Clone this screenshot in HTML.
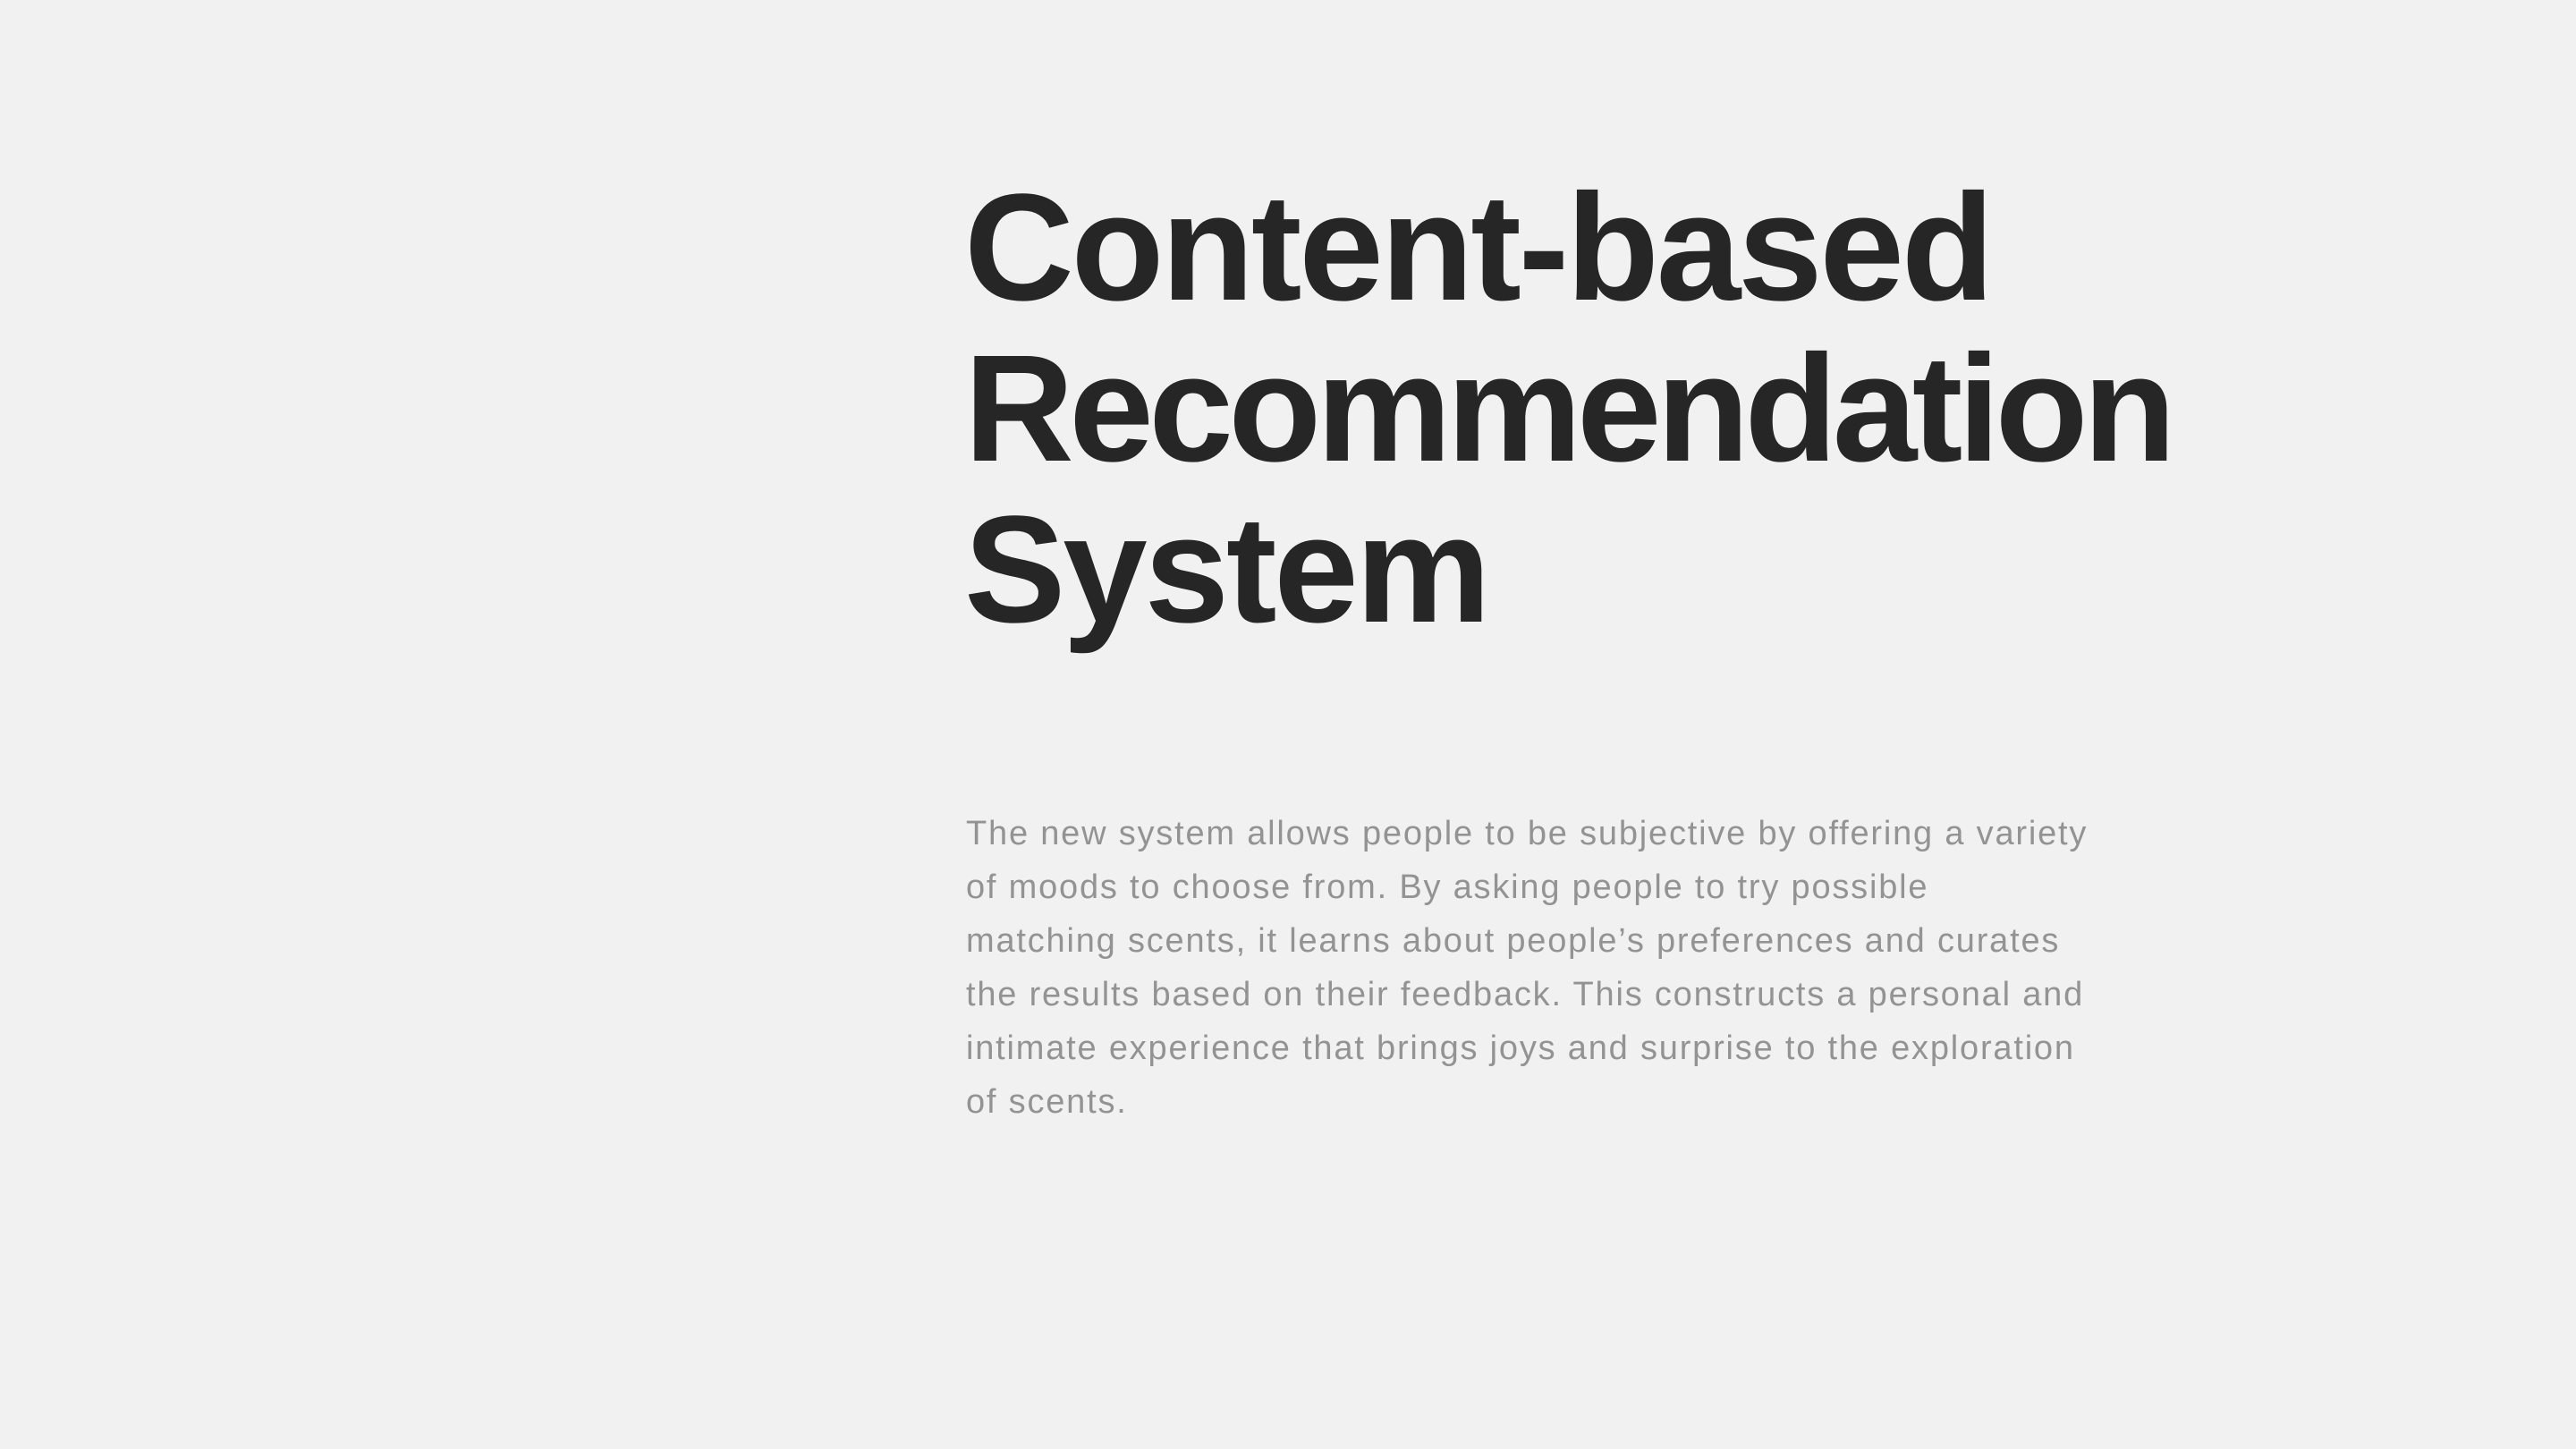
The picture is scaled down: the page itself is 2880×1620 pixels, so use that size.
<!DOCTYPE html>
<html><head><meta charset="utf-8"><style>
html,body{margin:0;padding:0;background:#f1f1f1;width:2880px;height:1620px;overflow:hidden}
h1{position:absolute;left:1078px;top:187px;margin:0;font:bold 170px/180px "Liberation Sans",sans-serif;color:#262626;letter-spacing:-3.2px;white-space:nowrap}
h1 span{letter-spacing:-5.5px}
p{position:absolute;left:1080px;top:902px;margin:0;font:38px/60px "Liberation Sans",sans-serif;color:#939393;letter-spacing:1.8px;white-space:nowrap}
</style></head><body>
<h1>Content-based<br><span>Recommendation</span><br>System</h1>
<p>The new system allows people to be subjective by offering a variety<br>of moods to choose from. By asking people to try possible<br>matching scents, it learns about people’s preferences and curates<br>the results based on their feedback. This constructs a personal and<br>intimate experience that brings joys and surprise to the exploration<br>of scents.</p>
</body></html>
